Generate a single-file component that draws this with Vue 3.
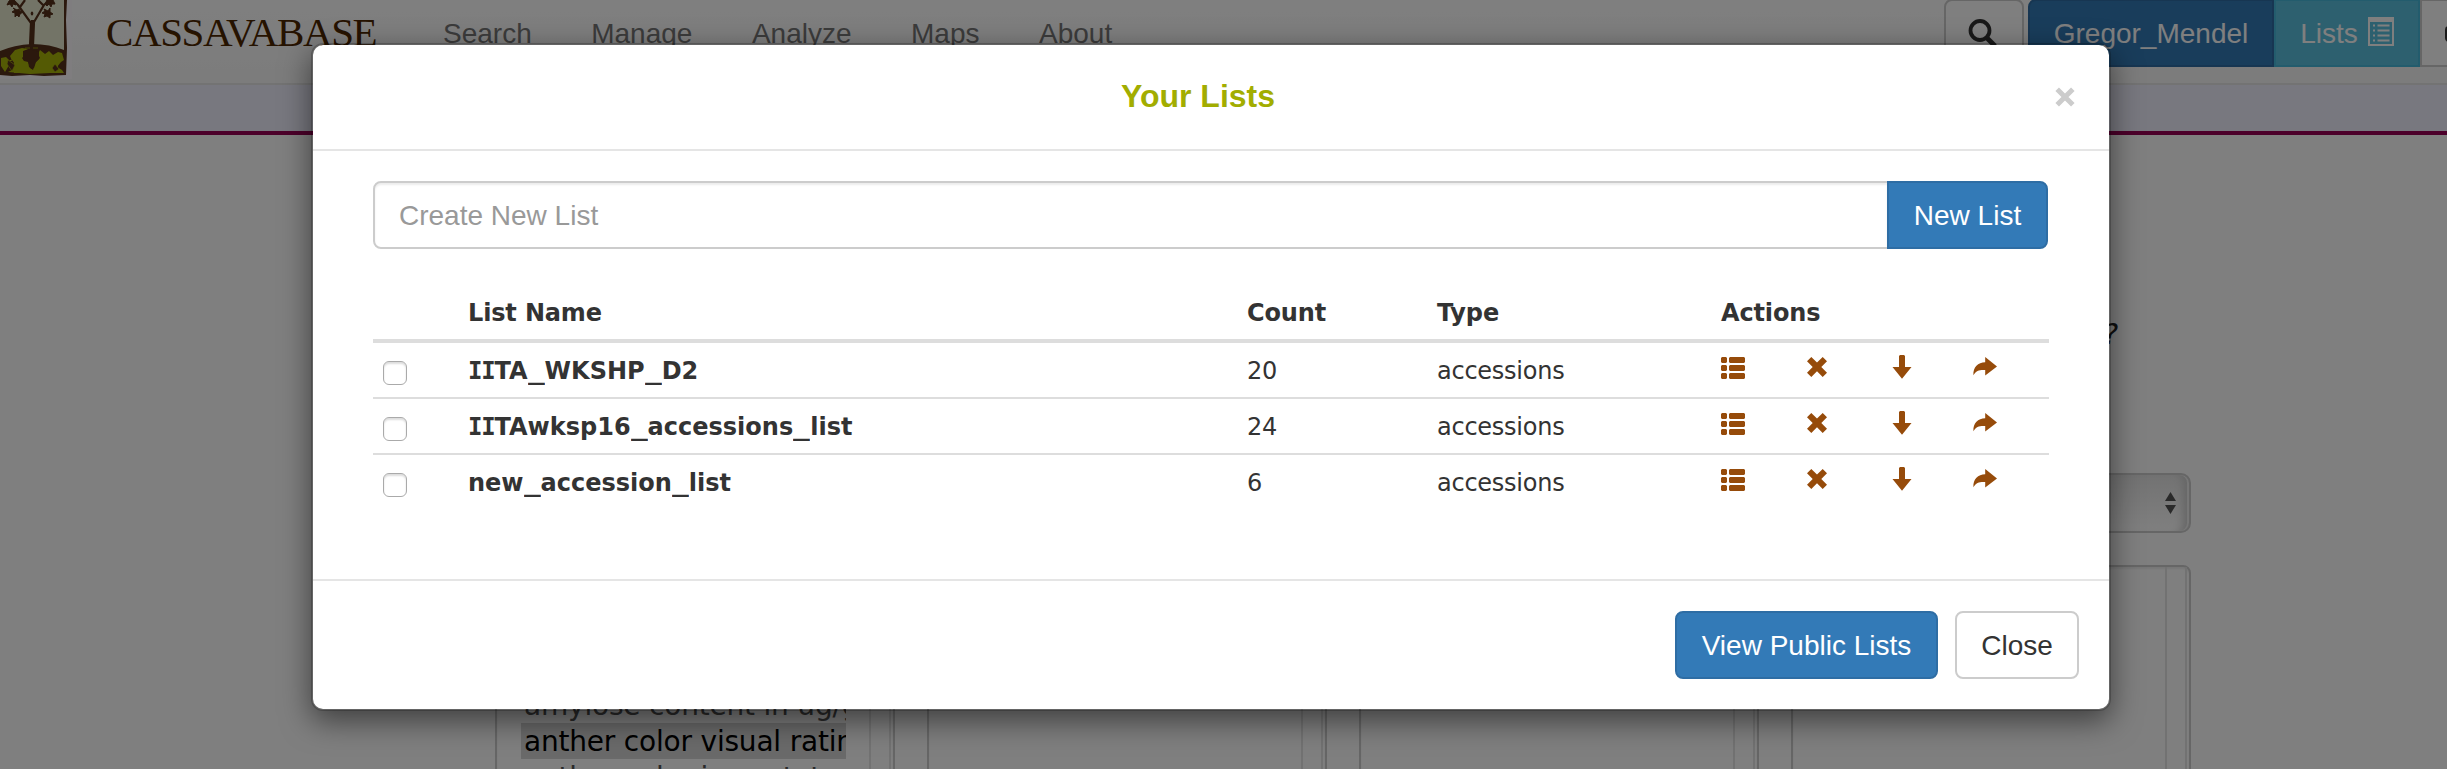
<script setup>
const nav = ['Search', 'Manage', 'Analyze', 'Maps', 'About']
const lists = [
  { name: 'IITA_WKSHP_D2', count: 20, type: 'accessions' },
  { name: 'IITAwksp16_accessions_list', count: 24, type: 'accessions' },
  { name: 'new_accession_list', count: 6, type: 'accessions' },
]
const traits = ['amylose content in ug/g', 'anther color visual rating', 'anther color i.e. estate rat']

// Splits a name so that capital I and underscore can take their own widths
const parts = (name) => name.split(/(I|_)/).filter(Boolean)
const partClass = (p) => (p === 'I' ? 'slab' : p === '_' ? 'under' : '')
</script>

<template>
  <div class="screen">
    <div class="page">
      <header class="navbar">
        <svg class="logo" width="72" height="80" viewBox="0 0 72 80">
          <rect width="72" height="79" fill="#fffaff" />
          <path d="M0 0H67L66 20L67 48L66 75L44 76L30 75L12 76L0 75Z" fill="#56301a" />
          <path d="M0 0H64V50Q50 44 32 44Q14 45 0 51Z" fill="#e7e9ce" />
          <path d="M30 45L31 23L18 5L13 0M33 45L34 22L44 5L50 0M20 7L25 0M44 6L38 0" fill="none" stroke="#56301a" stroke-width="2.2" />
          <path d="M30 45L31 20L34 20L34 45Z" fill="#56301a" />
          <path d="M7 5L9 1L12 -1L15 1L16 5L13 4L12 7L10 4ZM12 12L15 10L13 8L17 10L19 9L20 11L23 12L20 14L19 17L17 15L15 17L15 13ZM42 13L45 11L44 9L48 11L50 8L50 12L53 14L50 15L50 18L47 16L44 17L45 14ZM45 4L47 0L53 0L55 4L52 4L51 7L49 4L47 6Z" fill="#56301a" stroke="#56301a" />
          <ellipse cx="32" cy="13.500" rx="1.300" ry="2" fill="#56301a" />
          <path d="M1 58L6 57L10 61L12 61L10 56L15 50L22 48L28 49L24 51L26 54L22 58L24 61L28 62L31 69L34 68L36 62L40 58L38 54L40 50L45 54L49 51L53 55L58 52L62 53L64 60L61 62L57 67L62 70L64 73L50 73L30 74L8 72L12 70L15 64L12 60L8 60L8 67L5 72L1 66Z" fill="#a8b508" />
          <path d="M14 62H26L30 70H35L39 60H58V73H14Z" fill="#a8b508" />
          <path d="M23 51Q31 48 39 52L39 59L35 63L33 70L29 67L28 61L23 60Z" fill="#56301a" />
          <path d="M25 48h5M33 48h5M8 60l7 5-3 6-5-7ZM55 64l4 5-4 3-3-4Z" stroke="#a8b508" stroke-width=".7" fill="#56301a" />
        </svg>
        <span class="brand">CASSAVABASE</span>
        <nav><a v-for="n in nav" :key="n">{{ n }}</a></nav>
        <div class="tools">
          <button class="tool find">
            <svg width="32" height="32" viewBox="0 0 32 32" fill="none" stroke="#333"><circle cx="12" cy="12.5" r="9.5" stroke-width="3.8" /><path d="M19 20L27 28" stroke-width="5" /></svg>
          </button>
          <button class="tool user">Gregor_Mendel</button>
          <button class="tool lists">Lists
            <svg width="26" height="29" viewBox="0 0 26 29"><path d="M0 0H26V29H0ZM2 5V27H24V5Z" fill="#fff" fill-rule="evenodd" /><path d="M5 8.5h2M5 13.5h2M5 18.5h2M5 23.5h2M9.5 8.5h12M9.5 13.5h12M9.5 18.5h12M9.5 23.5h12" stroke="#fff" stroke-width="2" /></svg>
          </button>
          <button class="tool more"><i></i></button>
        </div>
      </header>
      <div class="band"></div>
      <main class="wizard">
        <p class="question">?</p>
        <div class="picker">
          <svg width="11" height="22" viewBox="0 0 11 22"><path d="M0 9L5.5 0L11 9ZM0 13H11L5.5 22Z" fill="#555" /></svg>
        </div>
        <div class="boxes">
          <div class="box"><ul><li v-for="(t, i) in traits" :key="t" :class="{ on: i === 1 }">{{ t }}</li></ul><span class="track"></span></div>
          <div v-for="i in 3" :key="i" class="box"><span class="track"></span></div>
        </div>
      </main>
    </div>

    <div class="backdrop">
      <section class="modal">
        <header class="head">
          <h4>Your Lists</h4>
          <svg class="x" width="20" height="20" viewBox="0 0 20 20"><path d="M2.2 2.2L17.8 17.8M17.8 2.2L2.2 17.8" stroke="#ccc" stroke-width="5" /></svg>
        </header>
        <div class="content">
          <div class="create">
            <input type="text" placeholder="Create New List">
            <button class="btn primary">New List</button>
          </div>
          <div class="table">
            <div class="row th"><span></span><span>List Name</span><span>Count</span><span>Type</span><span>Actions</span></div>
            <div v-for="l in lists" :key="l.name" class="row">
              <span><i class="check"></i></span>
              <b><span v-for="(p, i) in parts(l.name)" :key="i" :class="partClass(p)">{{ p }}</span></b>
              <span>{{ l.count }}</span>
              <span>{{ l.type }}</span>
              <svg width="24" height="24" viewBox="0 0 24 24"><path d="M1 2h4l1 1v4l-1 1H1L0 7V3ZM1 10h4l1 1v4l-1 1H1l-1-1v-4ZM1 18h4l1 1v4l-1 1H1l-1-1v-4ZM9 2h14l1 1v4l-1 1H9L8 7V3ZM9 10h14l1 1v4l-1 1H9l-1-1v-4ZM9 18h14l1 1v4l-1 1H9l-1-1v-4Z" /></svg>
              <svg width="24" height="24" viewBox="0 0 24 24"><path d="M6.300 2L12 7.600L17.700 2L22 6.300L16.300 12L22 17.700L17.700 22L12 16.300L6.300 22L2 17.700L7.700 12L2 6.300Z" /></svg>
              <svg width="24" height="24" viewBox="0 0 24 24"><path d="M10 0h4l1 1v11h6.500L12 23.700L2.500 12H9V1Z" /></svg>
              <svg width="24" height="24" viewBox="0 0 24 24"><path d="M12.200 2L24 11.500L12.200 20.500V15C7 14.600 3 15.500 .4 20.200C0 12 5 7.700 12.200 7.300Z" /></svg>
            </div>
          </div>
        </div>
        <footer class="foot">
          <button class="btn primary public">View Public Lists</button>
          <button class="btn close">Close</button>
        </footer>
      </section>
    </div>
  </div>
</template>

<style>
body { margin: 0; overflow: hidden; }
</style>

<style scoped>
* { box-sizing: border-box; }
.screen { position: relative; width: 2447px; height: 769px; overflow: hidden; background: #fff; font-family: "Liberation Sans", Arial, sans-serif; font-size: 28px; color: #333; }
.page { height: 769px; overflow: hidden; }
button { font: inherit; padding: 0; margin: 0; white-space: nowrap; }
.navbar { height: 85px; display: flex; align-items: flex-start; background: linear-gradient(#fff, #f8f8f8); border-bottom: 2px solid #e7e7e7; }
.logo { display: block; flex: none; }
.brand { font: 41px/48px "Liberation Serif", serif; color: #4d2600; margin: 8px 0 0 34px; width: 337px; letter-spacing: -1.4px; }
nav { display: flex; padding-top: 18px; line-height: 32px; color: #777; }
nav a { display: block; margin-right: 59.5px; }
.tools { display: flex; margin: -1px -20px 0 auto; }
.tool { height: 68px; border: 2px solid #ccc; background: #fff; color: #fff; display: flex; align-items: center; justify-content: center; padding-top: 2px; }
.find { width: 80px; border-radius: 8px; margin-right: 4px; padding-right: 0; }
.user { width: 246px; background: #337ab7; border-color: #2e6da4; border-radius: 8px 0 0 8px; }
.lists { width: 146px; background: #5bc0de; border-color: #46b8da; gap: 10px; }
.lists svg { margin-top: -5px; }
.more { width: 47px; justify-content: flex-start; }
.more i { width: 6px; height: 16px; margin-left: 23px; background: #333; border-radius: 4px 0 0 4px; }
.band { height: 50px; background: #f0f0ff; border-bottom: 4px solid #990055; }
.wizard { width: 1696px; margin-left: 495px; padding-top: 184px; }
.question { margin: 0; padding-right: 73px; text-align: right; font: italic 28px/32px "DejaVu Sans", sans-serif; color: #222; }
.picker { height: 60px; margin-top: 122px; border: 2px solid #ccc; border-radius: 10px; background: linear-gradient(#e5e5e5, #fff); box-shadow: inset -2px 0 0 #eee, inset -12px 0 8px -6px #ccc; display: flex; align-items: center; justify-content: flex-end; padding-right: 13px; }
.boxes { display: flex; gap: 32px; margin-top: 32px; }
.box { width: 400px; height: 300px; border: 2px solid #ccc; border-radius: 8px; padding-right: 2px; display: flex; justify-content: flex-end; flex: none; box-shadow: inset 0 2px 2px #eee; }
.track { width: 22px; border: 2px solid #e4e4e4; border-width: 0 2px; }
ul { list-style: none; margin: 0 23px 0 0; padding: 120px 0 0; width: 325px; font: 28px/36px "DejaVu Sans", Verdana, sans-serif; letter-spacing: -.2px; overflow: hidden; color: #555; }
li { height: 36px; padding: 1px 0 0 3px; white-space: nowrap; }
.on { background: #d4d4d4; color: #000; }
.backdrop { position: absolute; inset: 0; background: rgba(0, 0, 0, .5); padding: 43px 0 0 311px; }
.modal { width: 1800px; height: 668px; border: 2px solid rgba(0, 0, 0, .2); border-radius: 12px; background: #fff; background-clip: padding-box; box-shadow: 0 10px 30px rgba(0, 0, 0, .5); }
.head { height: 106px; border-bottom: 2px solid #e5e5e5; display: flex; align-items: flex-start; padding: 33px 34px 0 30px; }
h4 { flex: 1; margin: 0 2px 0 0; text-align: center; font-size: 32px; line-height: 36px; color: #a2ad00; }
.x { margin-top: 9px; }
.content { height: 428px; padding: 30px 60px 0 60px; }
.create { display: flex; height: 68px; margin-right: 1px; }
input { flex: 1; font: inherit; color: #555; border: 2px solid #ccc; border-radius: 8px 0 0 8px; padding: 2px 24px 0; box-shadow: inset 0 2px 2px rgba(0, 0, 0, .075); outline: none; }
input::placeholder { color: #999; opacity: 1; }
.btn { height: 68px; border: 2px solid #ccc; border-radius: 8px; background: #fff; color: #333; padding-top: 2px; }
.btn.primary { background: #337ab7; border-color: #2e6da4; color: #fff; }
.create .btn { width: 161px; margin-left: -2px; border-radius: 0 8px 8px 0; }
.table { margin-top: 36px; font: 24px/34px "DejaVu Sans", Verdana, sans-serif; letter-spacing: -.25px; }
.row { display: grid; grid-template-columns: 85px 779px 190px 284px 84px 85px 83px 86px; height: 56px; padding: 12px 0 0; border-top: 2px solid #ddd; }
.row > * { padding-left: 10px; margin-top: -1px; }
.row > svg { padding: 0; margin: 0 0 0 10px; fill: #964B0A; }
.row.th { height: 58px; font-weight: bold; border: 0; border-bottom: 4px solid #ddd; letter-spacing: -.15px; }
.th + .row { height: 54px; border: 0; }
b { letter-spacing: 0; }
.slab { font-family: "DejaVu Sans Mono", monospace; letter-spacing: -1.2px; }
.under { display: inline-block; width: 17px; transform: scaleX(1.4); transform-origin: left; }
.check { display: block; width: 24px; height: 24px; margin: 7px 0 0 0; border: 1.5px solid #aaa; border-radius: 6px; background: #fff; box-shadow: inset 0 2px 2px #ddd; }
.foot { border-top: 2px solid #e5e5e5; padding: 30px; display: flex; justify-content: flex-end; gap: 17px; }
.public { width: 263px; }
.close { width: 124px; }
</style>
